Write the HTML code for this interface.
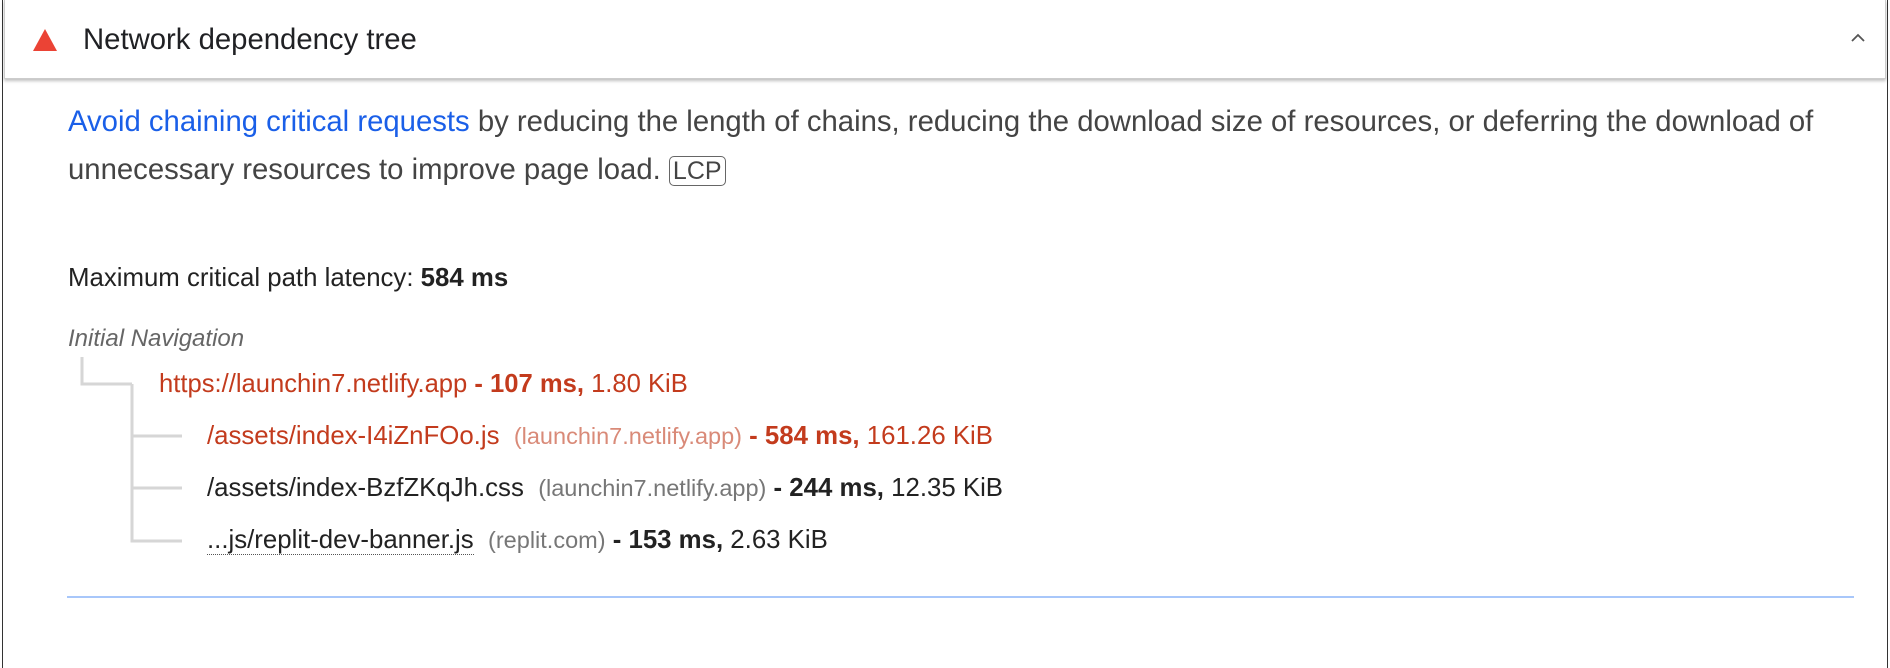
<!DOCTYPE html>
<html><head><style>
body{margin:0;width:1890px;height:658px;background:#fff;font-family:"Liberation Sans",sans-serif;position:relative;overflow:hidden}
.frame{position:absolute;left:2px;top:-2px;width:1884px;height:670px;border:1.5px solid #333;border-top:none;border-bottom:none}
.hdr{position:absolute;left:4px;top:0;width:1880px;height:78px;border:1px solid #ccc;border-top:none;box-shadow:0 2px 3px rgba(0,0,0,.25);background:#fff}
.t{position:absolute;white-space:nowrap}
.red{color:#c33b1d}
.g{color:#777}
</style></head><body>
<div class="frame"></div>
<div class="hdr"></div>
<svg class="t" style="left:32px;top:28px" width="26" height="24"><polygon points="13,1 25,23 1,23" fill="#eb4335"/></svg>
<div class="t" style="left:83px;top:23px;font-size:29.3px;color:#202124">Network dependency tree</div>
<svg class="t" style="left:1850px;top:32px" width="16" height="12"><polyline points="2,9 8,3 14,9" fill="none" stroke="#555" stroke-width="1.8"/></svg>
<div class="t" style="left:68px;top:98px;font-size:29.3px;line-height:48px;color:#444">
<span style="color:#1a5fe8">Avoid chaining critical requests</span> by reducing the length of chains, reducing the download size of resources, or deferring the download of<br>unnecessary resources to improve page load. <span style="border:1.5px solid #666;border-radius:5px;padding:0 3px;font-size:25px">LCP</span></div>
<div class="t" style="left:68px;top:264px;font-size:25.8px;color:#222">Maximum critical path latency: <b>584 ms</b></div>
<div class="t" style="left:68px;top:325px;font-size:24px;color:#666;font-style:italic">Initial Navigation</div>
<svg class="t" style="left:0;top:0" width="300" height="600">
<g stroke="#d6d6d6" stroke-width="3" fill="none">
<polyline points="82,357 82,384 132,384"/>
<polyline points="132,384 132,541 182,541"/>
<line x1="132" y1="436" x2="182" y2="436"/>
<line x1="132" y1="488" x2="182" y2="488"/>
</g></svg>
<div class="t red" style="left:159px;top:370px;font-size:25.6px">https://launchin7.netlify.app <b>- 107 ms,</b> 1.80 KiB</div>
<div class="t red" style="left:207px;top:422px;font-size:25.8px">/assets/index-I4iZnFOo.js&nbsp; <span style="color:#d98a78;font-size:23.5px">(launchin7.netlify.app)</span> <b>- 584 ms,</b> 161.26 KiB</div>
<div class="t" style="left:207px;top:474px;font-size:25.8px;color:#222">/assets/index-BzfZKqJh.css&nbsp; <span class="g" style="font-size:23.5px">(launchin7.netlify.app)</span> <b>- 244 ms,</b> 12.35 KiB</div>
<div class="t" style="left:207px;top:526px;font-size:25.8px;color:#222"><span style="border-bottom:1px dotted #555">...js/replit-dev-banner.js</span>&nbsp; <span class="g" style="font-size:23.5px">(replit.com)</span> <b>- 153 ms,</b> 2.63 KiB</div>
<div class="t" style="left:67px;top:596px;width:1787px;height:2px;background:#a8c7fa"></div>
</body></html>
